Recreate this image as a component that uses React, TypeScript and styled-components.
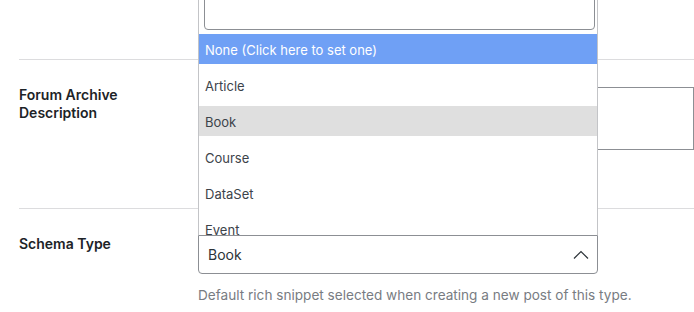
import React, { FC } from 'react'
import styled, { createGlobalStyle } from 'styled-components'

const GlobalStyle = createGlobalStyle`
  html, body {
    margin: 0;
    padding: 0;
    background: #ffffff;
    overflow: hidden;
  }
  body {
    font-family: Inter, "Noto Sans", "Liberation Sans", sans-serif;
    color: #1d2327;
  }
`

const options = ['None (Click here to set one)', 'Article', 'Book', 'Course', 'DataSet', 'Event', 'FAQ']

const App: FC = () => {
  return (
    <>
      <GlobalStyle />
      <Page>
        <Row height={60} />
        <Row height={149}>
          <Label>Forum Archive<br />Description</Label>
          <Field top={27}>
            <WideTextarea />
          </Field>
        </Row>
        <Row last>
          <Label>Schema Type</Label>
          <Field top={26}>
            <SelectWrap>
              <Popup>
                <SearchBox />
                <OptionList>
                  {options.map((o, i) => (
                    <Option key={o} active={i === 0} hovered={o === 'Book'}>{o}</Option>
                  ))}
                </OptionList>
              </Popup>
              <Select>
                <span>Book</span>
                <svg width="16" height="10" viewBox="0 0 16 10">
                  <polyline points="1,8.5 8,1.5 15,8.5" fill="none" stroke="#2c3338" strokeWidth="1.2" />
                </svg>
              </Select>
            </SelectWrap>
            <Help>Default rich snippet selected when creating a new post of this type.</Help>
          </Field>
        </Row>
      </Page>
    </>
  )
}

const Page = styled.div`
  padding-left: 19px;
  width: 800px;
`

const Row = styled.div<{ height?: number; last?: boolean }>`
  display: flex;
  height: ${p => (p.height ? `${p.height}px` : 'auto')};
  border-bottom: ${p => (p.last ? 'none' : '1px solid #dcdcde')};
  box-sizing: border-box;
`

const Label = styled.div`
  width: 179px;
  flex-shrink: 0;
  padding-top: 26px;
  font-size: 14px;
  line-height: 18px;
  font-weight: 600;
  color: #1d2327;
`

const Field = styled.div<{ top: number }>`
  flex: 1;
  padding-top: ${p => p.top}px;
`

const WideTextarea = styled.div`
  width: 496px;
  height: 63px;
  box-sizing: border-box;
  border: 1px solid #8c8f94;
  border-radius: 0;
`

const SelectWrap = styled.div`
  position: relative;
  width: 400px;
`

const Popup = styled.div`
  position: absolute;
  left: 0;
  bottom: 100%;
  width: 400px;
  height: 246px;
  box-sizing: border-box;
  border: 1px solid #c3c4c7;
  border-bottom: none;
  background: #ffffff;
  overflow: hidden;
  z-index: 5;
`

const SearchBox = styled.div`
  margin: 0 2px 0 5px;
  height: 40px;
  box-sizing: border-box;
  border: 1px solid #8c8f94;
  border-radius: 4px;
`

const OptionList = styled.div`
  display: flex;
  flex-direction: column;
  gap: 6px;
  margin-top: 4px;
`

const Option = styled.div<{ active?: boolean; hovered?: boolean }>`
  height: 30px;
  box-sizing: border-box;
  padding: 2px 0 0 6px;
  line-height: 28px;
  font-size: 13px;
  color: ${p => (p.active ? '#ffffff' : '#3c434a')};
  background: ${p => (p.active ? '#6fa0f5' : p.hovered ? '#dfdfdf' : 'transparent')};
`

const Select = styled.div`
  display: flex;
  align-items: center;
  justify-content: space-between;
  height: 39px;
  box-sizing: border-box;
  padding: 0 8px 0 9px;
  border: 1px solid #8c8f94;
  border-radius: 0 0 4px 4px;
  font-size: 14px;
  color: #2c3338;
  background: #ffffff;
`

const Help = styled.div`
  margin-top: 12px;
  font-size: 13.6px;
  line-height: 18px;
  color: #787c82;
`

export default App
